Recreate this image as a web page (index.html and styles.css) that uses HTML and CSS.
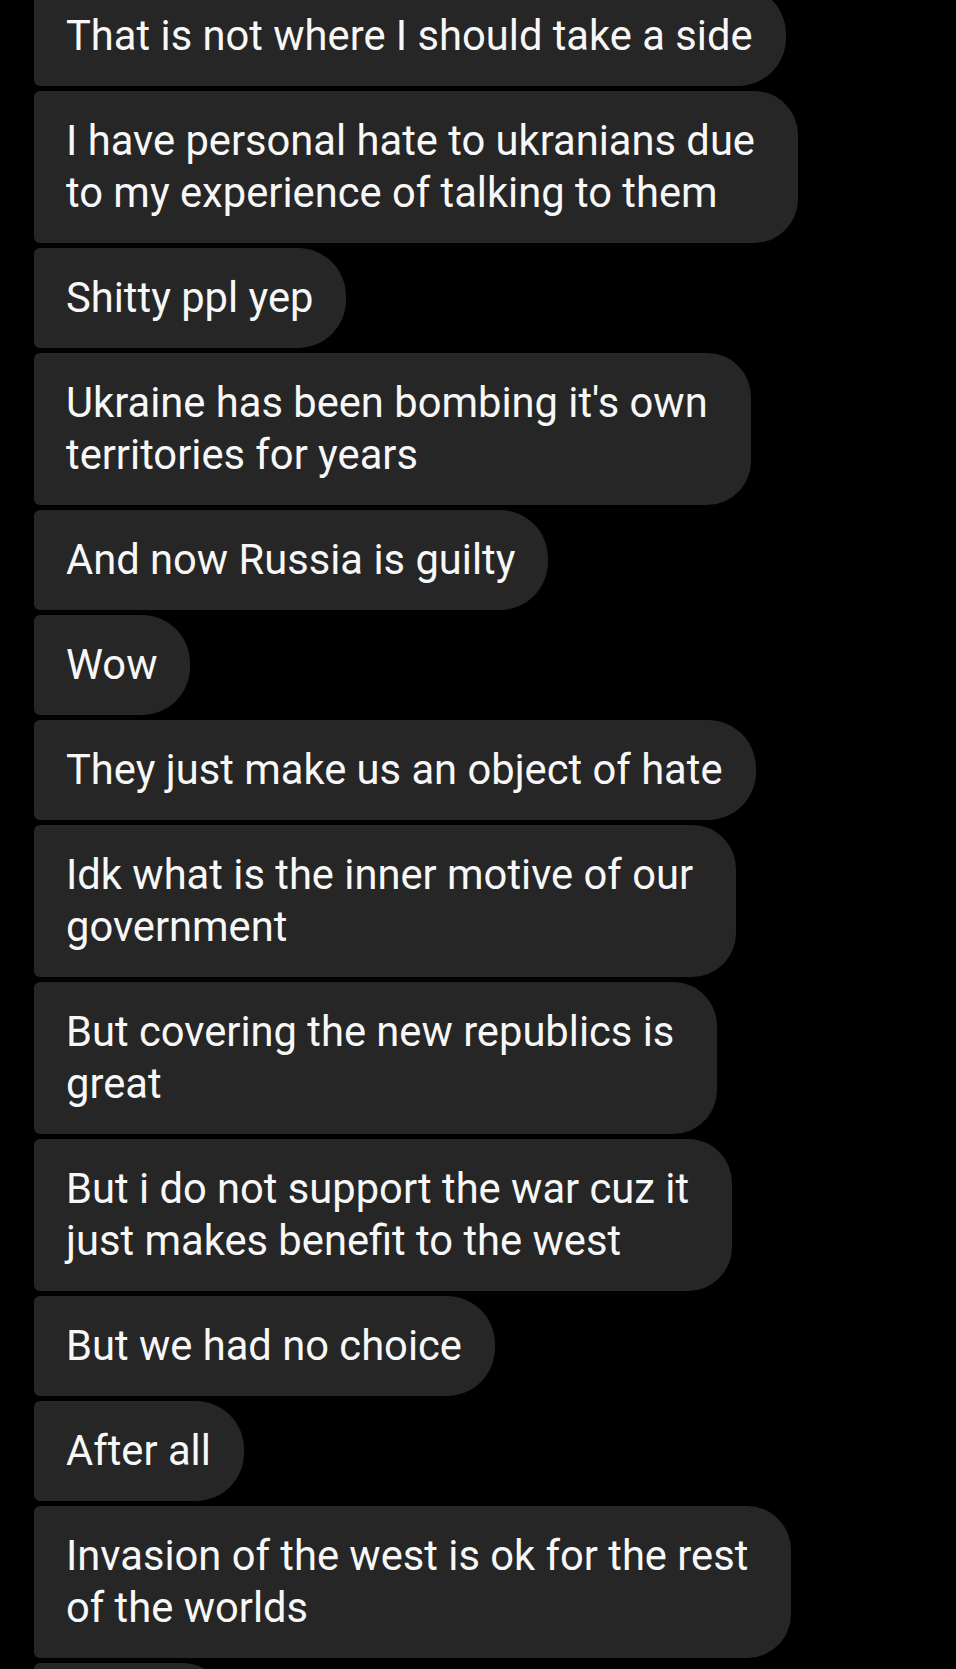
FILE: index.html
```html
<!DOCTYPE html>
<html lang="en">
<head>
  <meta charset="UTF-8" />
  <meta name="viewport" content="width=device-width, initial-scale=1.0"/>
  <title>Chat</title>
  <link rel="stylesheet" href="styles.css">
</head>
<body>

  <!-- incoming messages -->
  <div class="thread">
    <div class="bubble">That is not where I should take a side</div>
    <div class="bubble multi">I have personal hate to ukranians due<br>to my experience of talking to them</div>
    <div class="bubble">Shitty ppl yep</div>
    <div class="bubble multi">Ukraine has been bombing it's own<br>territories for years</div>
    <div class="bubble">And now Russia is guilty</div>
    <div class="bubble">Wow</div>
    <div class="bubble">They just make us an object of hate</div>
    <div class="bubble multi">Idk what is the inner motive of our<br>government</div>
    <div class="bubble multi">But covering the new republics is<br>great</div>
    <div class="bubble multi">But i do not support the war cuz it<br>just makes benefit to the west</div>
    <div class="bubble">But we had no choice</div>
    <div class="bubble">After all</div>
    <div class="bubble multi">Invasion of the west is ok for the rest<br>of the worlds</div>
    <!-- next message, only its top edge is on screen -->
    <div class="bubble bubble-cut"></div>
  </div>

</body>
</html>
```

FILE: styles.css
```css
body {
  background: #000000;
  font-family: Roboto, 'Noto Sans', sans-serif;
  margin: 0;
  overflow: hidden;
}

.thread {
  display: flex;
  flex-direction: column;
  align-items: flex-start;
  gap: 5px;
  padding-left: 34px;
  margin-top: -14px;
}

.bubble {
  background: #262626;
  color: #f7f7f7;
  font-size: 41.7px;
  line-height: 52px;
  padding: 24px 33px 24px 32px;
  border-radius: 6px 48px 48px 6px;
  white-space: nowrap;
}

/* wrapped messages get a little more room on the right */
.bubble.multi {
  padding-right: 43px;
  border-radius: 6px 44px 44px 6px;
}

.bubble-cut {
  width: 196px;
  height: 100px;
  padding: 0;
}
```
